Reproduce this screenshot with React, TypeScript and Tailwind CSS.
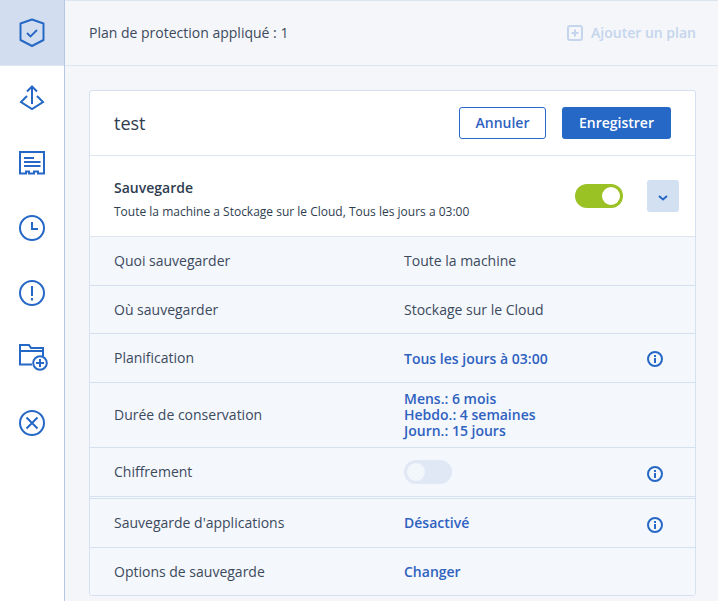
const font = "font-['Open_Sans','Noto_Sans',sans-serif]";

function ShieldIcon() {
  return (
    <svg width="26" height="30" viewBox="0 0 26 30" fill="none" stroke="#2668c5" strokeWidth="2">
      <path d="M13 1.5 L24.5 5.5 V22 L13 28 L1.5 22 V5.5 Z" strokeLinejoin="round" />
      <path d="M8 15 L11.5 18.5 L18 12" strokeWidth="1.8" />
    </svg>
  );
}

function DeployIcon() {
  return (
    <svg width="26" height="26" viewBox="0 0 26 26" fill="none" stroke="#2668c5" strokeWidth="2">
      <path d="M8 6.5 L13 1.5 L18 6.5" />
      <path d="M13 2 V19" />
      <path d="M8 11 L2 17 L13 24 L24 17 L18 11" />
    </svg>
  );
}

function ReportIcon() {
  return (
    <svg width="26" height="24" viewBox="0 0 26 24" fill="none" stroke="#2668c5" strokeWidth="2">
      <path d="M1 1 H25 V22.5 H19 V20.5 H15 V22.5 H10 V20.5 H7 V22.5 H1 Z" />
      <path d="M5 7 H15 M5 11 H21.5 M5 15 H21.5" />
    </svg>
  );
}

function ClockIcon() {
  return (
    <svg width="26" height="26" viewBox="0 0 26 26" fill="none" stroke="#2668c5" strokeWidth="2">
      <circle cx="13" cy="13" r="12" />
      <path d="M13 7 V14 H19" />
    </svg>
  );
}

function AlertIcon() {
  return (
    <svg width="26" height="26" viewBox="0 0 26 26" fill="none" stroke="#2668c5" strokeWidth="2">
      <circle cx="13" cy="13" r="12" />
      <path d="M13 6 V16 M13 18 V20.5" />
    </svg>
  );
}

function FolderPlusIcon() {
  return (
    <svg className="ml-[2px]" width="29" height="27" viewBox="0 0 29 27" fill="none" stroke="#2668c5" strokeWidth="2">
      <path d="M13 20.5 H1 V1 H10 L12 4 H24 V12" />
      <path d="M1 7 H24" />
      <circle cx="21" cy="19" r="6.8" fill="white" />
      <path d="M17 19 H25 M21 15 V23" />
    </svg>
  );
}

function CancelIcon() {
  return (
    <svg width="26" height="26" viewBox="0 0 26 26" fill="none" stroke="#2668c5" strokeWidth="2">
      <circle cx="13" cy="13" r="12" />
      <path d="M7.5 7.5 L18.5 18.5 M18.5 7.5 L7.5 18.5" />
    </svg>
  );
}

function InfoIcon() {
  return (
    <svg width="16" height="16" viewBox="0 0 16 16" fill="none" stroke="#2668c5" strokeWidth="2">
      <circle cx="8" cy="8" r="7" />
      <path d="M8 7 V12 M8 4 V6" />
    </svg>
  );
}

function Toggle({ on }: { on: boolean }) {
  return (
    <div
      className={`flex h-6 w-12 items-center rounded-full px-[3px] ${
        on ? "justify-end bg-[#9bc225]" : "justify-start bg-[#dfe8f4]"
      }`}
    >
      <div className={`h-[18px] w-[18px] rounded-full ${on ? "bg-white" : "bg-[#f3f6fb]"}`} />
    </div>
  );
}

function Row({
  label,
  height,
  border = true,
  info,
  children,
}: {
  label: string;
  height: string;
  border?: boolean;
  info?: string;
  children: React.ReactNode;
}) {
  return (
    <div className={`flex items-center pl-6 ${height} ${border ? "border-b border-[#d5e1f0]" : ""}`}>
      <div className="w-[290px] shrink-0 text-sm text-[#3c4a5c]">{label}</div>
      <div className="flex-1">{children}</div>
      {info && (
        <div className={`mr-8 ${info}`}>
          <InfoIcon />
        </div>
      )}
    </div>
  );
}

const sideIcons = [
  <DeployIcon key="deploy" />,
  <ReportIcon key="report" />,
  <ClockIcon key="clock" />,
  <AlertIcon key="alert" />,
  <FolderPlusIcon key="folder" />,
  <CancelIcon key="cancel" />,
];

export default function App() {
  const link = "text-sm font-semibold text-[#2f62c0]";
  return (
    <div className={`flex h-[601px] w-[718px] overflow-hidden bg-[#f4f6fa] ${font}`}>
      <aside className="w-[65px] shrink-0 border-r border-[#b4c8e3] bg-white">
        <div className="flex h-[66px] items-center justify-center border-b border-[#dde5f0] bg-[#d2deef]">
          <ShieldIcon />
        </div>
        <div className="-mt-px">
          {sideIcons.map((icon, i) => (
            <div key={i} className="flex h-[65px] items-center justify-center">
              {icon}
            </div>
          ))}
        </div>
      </aside>

      <main className="min-w-0 flex-1">
        <header className="flex h-[66px] items-center justify-between border-t border-b border-[#dde5f0] pl-6 pr-[22px]">
          <span className="text-sm text-[#3c4a5c]">Plan de protection appliqué : 1</span>
          <div className="flex items-center gap-2 text-sm font-semibold text-[#c4d5ec]">
            <svg width="16" height="16" viewBox="0 0 16 16" fill="none" stroke="#c4d5ec" strokeWidth="2">
              <rect x="1" y="1" width="14" height="14" rx="2" />
              <path d="M4.5 8 H11.5 M8 4.5 V11.5" />
            </svg>
            Ajouter un plan
          </div>
        </header>

        <div className="ml-6 mt-6 h-[506px] w-[607px] overflow-hidden rounded-[3px] border border-[#d5e1f0] bg-white">
          <div className="flex h-[65px] items-center justify-between border-b border-[#dde5f0] pl-6 pr-6">
            <span className="text-lg text-[#2f3d50]">test</span>
            <div className="flex gap-4">
              <button className="h-8 w-[87px] rounded-[3px] border border-[#2668c5] text-sm font-semibold text-[#2f62c0]">
                Annuler
              </button>
              <button className="h-8 w-[109px] rounded-[3px] bg-[#2668c5] text-sm font-semibold text-white">
                Enregistrer
              </button>
            </div>
          </div>

          <div className="flex h-[81px] items-center border-b border-[#dde5f0] pl-6 pr-4">
            <div className="flex-1 pt-[7px]">
              <div className="text-sm font-semibold leading-5 text-[#2f3d50]">Sauvegarde</div>
              <div className="mt-1 text-xs leading-5 text-[#2f3d50]">
                Toute la machine a Stockage sur le Cloud, Tous les jours a 03:00
              </div>
            </div>
            <Toggle on />
            <div className="ml-6 flex h-8 w-8 items-center justify-center rounded-[3px] bg-[#d3e0f2]">
              <svg className="mt-[3px]" width="10" height="6" viewBox="0 0 10 6" fill="none" stroke="#2668c5" strokeWidth="2">
                <path d="M1 1 L5 4.5 L9 1" />
              </svg>
            </div>
          </div>

          <div className="bg-[#f4f7fc]">
            <Row label="Quoi sauvegarder" height="h-[49px]">
              <div className="text-sm text-[#3c4a5c]">Toute la machine</div>
            </Row>
            <Row label="Où sauvegarder" height="h-[48px]">
              <div className="text-sm text-[#3c4a5c]">Stockage sur le Cloud</div>
            </Row>
            <Row label="Planification" height="h-[49px]" info="mt-[2px]">
              <span className={link}>Tous les jours à 03:00</span>
            </Row>
            <Row label="Durée de conservation" height="h-[65px]">
              <div className={`${link} leading-4`}>
                <div>Mens.: 6 mois</div>
                <div>Hebdo.: 4 semaines</div>
                <div>Journ.: 15 jours</div>
              </div>
            </Row>
            <Row label="Chiffrement" height="h-[49px]" info="mt-1">
              <Toggle on={false} />
            </Row>
            <div className="h-px" />
            <div className="border-t border-[#d5e1f0]">
              <Row label="Sauvegarde d'applications" height="h-[49px]" info="mt-1">
                <div className={link}>Désactivé</div>
              </Row>
            </div>
            <Row label="Options de sauvegarde" height="h-[48px]" border={false}>
              <div className={link}>Changer</div>
            </Row>
          </div>
        </div>
      </main>
    </div>
  );
}
